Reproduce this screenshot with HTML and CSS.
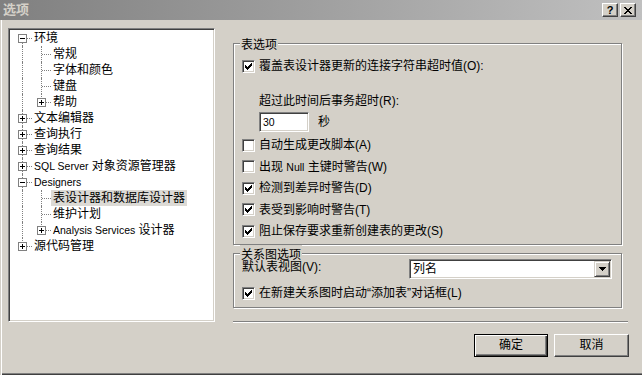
FILE: index.html
```html
<!DOCTYPE html>
<html lang="zh-CN">
<head>
<meta charset="utf-8">
<title>选项</title>
<link rel="stylesheet" href="styles.css">
</head>
<body>
<div class="window">
  <div class="titlebar">
    <span class="title">选项</span>
    <div class="caption-buttons">
      <span class="cap-btn help">?</span>
      <span class="cap-btn close"><svg width="8" height="7" viewBox="0 0 8 7" shape-rendering="crispEdges"><path d="M0 0h2v1h-2z M6 0h2v1h-2z M1 1h2v1h-2z M5 1h2v1h-2z M2 2h4v1h-4z M3 3h2v1h-2z M2 4h4v1h-4z M1 5h2v1h-2z M5 5h2v1h-2z M0 6h2v1h-2z M6 6h2v1h-2z" fill="#000"/></svg></span>
    </div>
  </div>

  <div class="main">
    <div class="tree">
      <div class="row"><span class="c first"><span class="exp minus"></span></span><span class="lbl">环境</span></div>
      <div class="row"><span class="c pipe"></span><span class="c tee"></span><span class="lbl">常规</span></div>
      <div class="row"><span class="c pipe"></span><span class="c tee"></span><span class="lbl">字体和颜色</span></div>
      <div class="row"><span class="c pipe"></span><span class="c tee"></span><span class="lbl">键盘</span></div>
      <div class="row"><span class="c pipe"></span><span class="c last"><span class="exp plus"></span></span><span class="lbl">帮助</span></div>
      <div class="row"><span class="c tee"><span class="exp plus"></span></span><span class="lbl">文本编辑器</span></div>
      <div class="row"><span class="c tee"><span class="exp plus"></span></span><span class="lbl">查询执行</span></div>
      <div class="row"><span class="c tee"><span class="exp plus"></span></span><span class="lbl">查询结果</span></div>
      <div class="row"><span class="c tee"><span class="exp plus"></span></span><span class="lbl"><span class="en">SQL Server</span> 对象资源管理器</span></div>
      <div class="row"><span class="c tee"><span class="exp minus"></span></span><span class="lbl"><span class="en">Designers</span></span></div>
      <div class="row"><span class="c pipe"></span><span class="c tee"></span><span class="lbl sel">表设计器和数据库设计器</span></div>
      <div class="row"><span class="c pipe"></span><span class="c tee"></span><span class="lbl">维护计划</span></div>
      <div class="row"><span class="c pipe"></span><span class="c last"><span class="exp plus"></span></span><span class="lbl"><span class="en">Analysis Services</span> 设计器</span></div>
      <div class="row"><span class="c last"><span class="exp plus"></span></span><span class="lbl">源代码管理</span></div>
    </div>

    <div class="pane">
      <fieldset class="group g1">
        <legend>表选项</legend>
        <div class="chk-row r1">
          <span class="cb"><svg width="11" height="11" viewBox="1 1 11 11" shape-rendering="crispEdges"><path d="M3 5v3h1v1h1v1h1v-1h1v-1h1v-1h1v-1h1v-3h-1v1h-1v1h-1v1h-1v1h-1v-1h-1v-1z" fill="#000"/></svg></span>
          <span>覆盖表设计器更新的连接字符串超时值(O):</span>
        </div>
        <div class="sub-label">超过此时间后事务超时(R):</div>
        <div class="sub-input">
          <span class="textbox"><span class="en">30</span></span>
          <span class="unit">秒</span>
        </div>
        <div class="chk-row opt o1">
          <span class="cb"></span>
          <span>自动生成更改脚本(A)</span>
        </div>
        <div class="chk-row opt">
          <span class="cb"></span>
          <span>出现 <span class="en">Null</span> 主键时警告(W)</span>
        </div>
        <div class="chk-row opt">
          <span class="cb"><svg width="11" height="11" viewBox="1 1 11 11" shape-rendering="crispEdges"><path d="M3 5v3h1v1h1v1h1v-1h1v-1h1v-1h1v-1h1v-3h-1v1h-1v1h-1v1h-1v1h-1v-1h-1v-1z" fill="#000"/></svg></span>
          <span>检测到差异时警告(D)</span>
        </div>
        <div class="chk-row opt">
          <span class="cb"><svg width="11" height="11" viewBox="1 1 11 11" shape-rendering="crispEdges"><path d="M3 5v3h1v1h1v1h1v-1h1v-1h1v-1h1v-1h1v-3h-1v1h-1v1h-1v1h-1v1h-1v-1h-1v-1z" fill="#000"/></svg></span>
          <span>表受到影响时警告(T)</span>
        </div>
        <div class="chk-row opt">
          <span class="cb"><svg width="11" height="11" viewBox="1 1 11 11" shape-rendering="crispEdges"><path d="M3 5v3h1v1h1v1h1v-1h1v-1h1v-1h1v-1h1v-3h-1v1h-1v1h-1v1h-1v1h-1v-1h-1v-1z" fill="#000"/></svg></span>
          <span>阻止保存要求重新创建表的更改(S)</span>
        </div>
      </fieldset>

      <fieldset class="group g2">
        <legend>关系图选项</legend>
        <div class="combo-row">
          <span class="combo-label">默认表视图(V):</span>
          <div class="combo">
            <span class="combo-text">列名</span>
            <span class="combo-btn"><svg width="7" height="4" viewBox="0 0 7 4" shape-rendering="crispEdges"><path d="M0 0h7v1h-1v1h-1v1h-1v1h-1v-1h-1v-1h-1v-1h-1z" fill="#000"/></svg></span>
          </div>
        </div>
        <div class="chk-row r2">
          <span class="cb"><svg width="11" height="11" viewBox="1 1 11 11" shape-rendering="crispEdges"><path d="M3 5v3h1v1h1v1h1v-1h1v-1h1v-1h1v-1h1v-3h-1v1h-1v1h-1v1h-1v1h-1v-1h-1v-1z" fill="#000"/></svg></span>
          <span>在新建关系图时启动“添加表”对话框(L)</span>
        </div>
      </fieldset>

      <div class="sep"></div>
    </div>
  </div>

  <div class="footer">
    <button class="btn default" type="button">确定</button>
    <button class="btn" type="button">取消</button>
  </div>
</div>
</body>
</html>
```

FILE: styles.css
```css
* {
  box-sizing: border-box;
}

html,
body {
  margin: 0;
  padding: 0;
}

body {
  width: 642px;
  height: 375px;
  overflow: hidden;
  background: #d4d0c8;
  color: #000;
  font-family: "Liberation Sans", "Noto Sans CJK SC", sans-serif;
  font-size: 12px;
}

.en {
  font-size: 10.5px;
}

.window {
  width: 642px;
  height: 375px;
  display: flex;
  flex-direction: column;
  background: #d4d0c8;
  box-shadow: inset 1px 0 0 #d4d0c8, inset 2px 0 0 #fff, inset 0 -1px 0 #404040, inset 0 -2px 0 #808080;
}

/* title bar */
.titlebar {
  flex: none;
  height: 20px;
  display: flex;
  align-items: center;
  padding: 0 6px 0 3px;
  background: linear-gradient(to right, #808080, #c0c0c0);
}

.title {
  flex: 1;
  color: #d4d0c8;
  font-weight: bold;
  font-size: 13px;
  line-height: 20px;
}

.caption-buttons {
  display: flex;
  gap: 2px;
}

.cap-btn {
  width: 16px;
  height: 14px;
  display: flex;
  align-items: center;
  justify-content: center;
  background: #d4d0c8;
  border: 1px solid;
  border-color: #fff #404040 #404040 #fff;
  box-shadow: inset -1px -1px 0 #808080;
}

.cap-btn.help {
  font-weight: bold;
  font-size: 11px;
  line-height: 1;
  padding-top: 1px;
}

.cap-btn svg {
  display: block;
}

/* main area */
.main {
  flex: none;
  height: 302px;
  display: flex;
  padding: 8px 12px 0 8px;
}

.tree {
  flex: none;
  width: 207px;
  height: 294px;
  background: #fff;
  border: 1px solid;
  border-color: #808080 #fff #fff #808080;
  box-shadow: inset 1px 1px 0 #404040, inset -1px -1px 0 #d4d0c8;
  padding: 1px 0 0 4px;
}

.row {
  display: flex;
  align-items: center;
  height: 16px;
}

.c {
  position: relative;
  flex: none;
  width: 19px;
  height: 16px;
}

.c::before,
.c::after {
  content: "";
  position: absolute;
}

.c.tee::before,
.c.pipe::before {
  left: 9px;
  top: 0;
  bottom: 0;
  border-left: 1px dotted #808080;
}

.c.first::before {
  left: 9px;
  top: 8px;
  bottom: 0;
  border-left: 1px dotted #808080;
}

.c.last::before {
  left: 9px;
  top: 0;
  height: 9px;
  border-left: 1px dotted #808080;
}

.c.tee::after,
.c.first::after,
.c.last::after {
  left: 10px;
  right: 0;
  top: 8px;
  border-top: 1px dotted #808080;
}

.exp {
  position: absolute;
  left: 5px;
  top: 4px;
  width: 9px;
  height: 9px;
  border: 1px solid #808080;
  background: #fff;
  z-index: 1;
}

.exp::before {
  content: "";
  position: absolute;
  left: 1px;
  top: 3px;
  width: 5px;
  height: 1px;
  background: #000;
}

.exp.plus::after {
  content: "";
  position: absolute;
  left: 3px;
  top: 1px;
  width: 1px;
  height: 5px;
  background: #000;
}

.lbl {
  padding: 0 2px;
  line-height: 16px;
  white-space: nowrap;
}

.lbl.sel {
  background: #dcdad5;
}

/* right pane */
.pane {
  flex: 1;
  min-width: 0;
  margin-left: 18px;
  padding-top: 7px;
  display: flex;
  flex-direction: column;
}

.group {
  margin: 0 8px 0 0;
  padding: 0 9px 0 8px;
  min-width: 0;
  border: 1px solid #808080;
  box-shadow: inset 1px 1px 0 #fff, 1px 1px 0 #fff;
}

.group legend {
  margin-left: -2px;
  padding: 4px 1px 0;
  line-height: 12px;
  background: #d4d0c8;
}

.g1 {
  padding-bottom: 2px;
}

.g2 {
  margin-top: 0;
  padding-bottom: 6px;
}

.chk-row {
  display: flex;
  align-items: center;
  gap: 4px;
  height: 16px;
  line-height: 16px;
  white-space: nowrap;
}

.r1 {
  margin-top: 7px;
}

.opt {
  height: 21.5px;
}

.o1 {
  margin-top: 2.5px;
}

.r2 {
  margin-top: 6px;
}

.cb {
  flex: none;
  display: block;
  width: 13px;
  height: 13px;
  background: #fff;
  border: 1px solid;
  border-color: #808080 #fff #fff #808080;
  box-shadow: inset 1px 1px 0 #404040, inset -1px -1px 0 #d4d0c8;
}

.cb svg {
  display: block;
}

.sub-label {
  margin: 19px 0 0 17px;
  line-height: 16px;
}

.sub-input {
  margin: 3px 0 0 17px;
  height: 20px;
  display: flex;
  align-items: center;
}

.textbox {
  width: 50px;
  height: 20px;
  background: #fff;
  border: 1px solid;
  border-color: #808080 #fff #fff #808080;
  box-shadow: inset 1px 1px 0 #404040, inset -1px -1px 0 #d4d0c8;
  padding: 1px 0 0 3px;
  line-height: 16px;
}

.unit {
  margin-left: 9px;
  line-height: 16px;
}

.combo-row {
  margin-top: -2px;
  height: 20px;
  display: flex;
  align-items: flex-start;
}

.combo-label {
  margin-top: 2px;
  line-height: 12px;
  white-space: nowrap;
}

.combo {
  margin-left: auto;
  width: 203px;
  height: 20px;
  display: flex;
  background: #fff;
  border: 1px solid;
  border-color: #808080 #fff #fff #808080;
  box-shadow: inset 1px 1px 0 #404040, inset -1px -1px 0 #d4d0c8;
  padding: 1px;
}

.combo-text {
  flex: 1;
  padding-left: 2px;
  line-height: 16px;
}

.combo-btn {
  flex: none;
  width: 16px;
  height: 16px;
  display: flex;
  align-items: center;
  justify-content: center;
  background: #d4d0c8;
  border: 1px solid;
  border-color: #d4d0c8 #404040 #404040 #d4d0c8;
  box-shadow: inset 1px 1px 0 #fff, inset -1px -1px 0 #808080;
}

.combo-btn svg {
  display: block;
}

.sep {
  margin: auto 2px -1px 0;
  height: 2px;
  border-top: 1px solid #808080;
  border-bottom: 1px solid #fff;
}

/* footer buttons */
.footer {
  flex: none;
  display: flex;
  justify-content: flex-end;
  gap: 6px;
  padding: 12px 13px 0 0;
}

.btn {
  width: 75px;
  height: 23px;
  padding: 0;
  font: inherit;
  line-height: 19px;
  color: #000;
  background: #d4d0c8;
  border: 1px solid;
  border-color: #fff #404040 #404040 #fff;
  box-shadow: inset -1px -1px 0 #808080;
}

.btn.default {
  width: 74px;
  border: 1px solid #000;
  box-shadow: inset 1px 1px 0 #fff, inset -1px -1px 0 #404040, inset -2px -2px 0 #808080;
}
```
